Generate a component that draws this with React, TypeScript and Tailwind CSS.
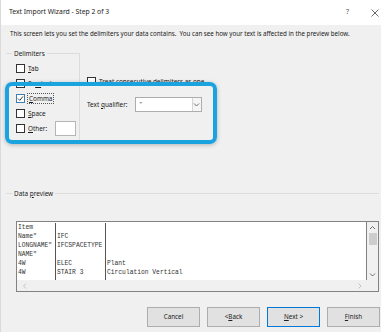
const ui = { fontFamily: '"Segoe UI", "Noto Sans", "Open Sans", sans-serif' };
const mono = { fontFamily: '"Liberation Mono", "Courier New", monospace' };

// ─── Bits ─────────────────────────────────────────────────────────────────────

const Box = ({ checked = false }: { checked?: boolean }) => (
  <span
    className={`flex h-[9px] w-[9px] shrink-0 items-center justify-center border bg-white ${checked ? "border-[#3c7fb1]" : "border-[#333]"}`}
  >
    {checked && (
      <svg width="7" height="7" viewBox="0 0 7 7">
        <path d="M1 3.6 L2.8 5.4 L6 1.4" fill="none" stroke="#2b2b2b" strokeWidth="0.9" />
      </svg>
    )}
  </span>
);

const Chevron = ({ dir }: { dir: "up" | "down" | "left" | "right" }) => {
  const d = {
    up: "M1 4 L3.5 1.5 L6 4",
    down: "M1 1.5 L3.5 4 L6 1.5",
    left: "M4 0.5 L1.5 3 L4 5.5",
    right: "M1.5 0.5 L4 3 L1.5 5.5",
  }[dir];
  return (
    <svg width="7" height="6" viewBox="0 0 7 6">
      <path d={d} fill="none" stroke={dir === "left" || dir === "right" ? "#bdbdbd" : "#606060"} strokeWidth="0.9" />
    </svg>
  );
};

const Btn = ({ children, primary = false }: { children: React.ReactNode; primary?: boolean }) => (
  <div
    className={`flex h-[20px] w-[53px] items-center justify-center bg-[#e1e1e1] text-[6.3px] text-[#222] ${primary ? "border border-[#0078d7]" : "border border-[#adadad]"}`}
  >
    {children}
  </div>
);

const rows = [
  ["Item", "", ""],
  ['Name"', "IFC", ""],
  ['LONGNAME"', "IFCSPACETYPE", ""],
  ['NAME"', "", ""],
  ["4W", "ELEC", "Plant"],
  ["4W", "STAIR 3", "Circulation Vertical"],
];

// ─── Component ────────────────────────────────────────────────────────────────

export default function App() {
  return (
    <div className="relative h-[332px] w-[386px] overflow-hidden bg-white text-[#1a1a1a]" style={ui}>
      <div className="flex h-full w-[381px] flex-col border-l border-[#dadada]">
        {/* title bar */}
        <div className="flex h-[25px] shrink-0 items-center bg-white pl-[8px] text-[6.8px]">
          <span className="flex-1">Text Import Wizard - Step 2 of 3</span>
          <span className="mr-[22px] text-[7px] text-[#555]">?</span>
          <svg width="8" height="8" viewBox="0 0 8 8" className="mr-[2px]">
            <path d="M0.5 0.5 L7.5 7.5 M7.5 0.5 L0.5 7.5" stroke="#444" strokeWidth="0.8" />
          </svg>
        </div>

        {/* body */}
        <div className="relative flex flex-1 flex-col bg-[#f0f0f0] pl-[5px]">
          <p className="mt-[5px] pl-[4px] text-[6.2px] leading-[8px] text-[#222]">
            This screen lets you set the delimiters your data contains.&nbsp; You can see how your text is affected in the preview below.
          </p>

          <div className="mt-[15px] flex">
            {/* Delimiters group */}
            <div className="relative h-[90px] w-[74px] border-t border-r border-[#dcdcdc] pl-[10px] pt-[7px] text-[6.4px]">
              <span className="absolute -top-[5px] left-[6px] bg-[#f0f0f0] px-[2px] leading-[9px]">Delimiters</span>
              <div className="flex h-[15px] items-center gap-[2px]">
                <Box />
                <span className="px-[1px]"><u>T</u>ab</span>
              </div>
              <div className="flex h-[15px] items-center gap-[2px]">
                <Box />
                <span className="px-[1px]">Se<u>m</u>icolon</span>
              </div>
              <div className="flex h-[15px] items-center gap-[2px]">
                <Box checked />
                <span className="border border-dotted border-[#555] px-[1px] leading-[9px]"><u>C</u>omma</span>
              </div>
              <div className="flex h-[15px] items-center gap-[2px]">
                <Box />
                <span className="px-[1px]"><u>S</u>pace</span>
              </div>
              <div className="flex h-[15px] items-center gap-[2px]">
                <Box />
                <span className="px-[1px]"><u>O</u>ther:</span>
                <span className="ml-[5px] h-[15px] w-[21px] border border-[#b5b5b5] bg-white" />
              </div>
            </div>

            {/* right options */}
            <div className="ml-[7px] flex flex-col text-[6.4px]">
              <div className="mt-[24px] flex h-[9px] items-center gap-[2px]">
                <Box />
                <span className="px-[1px]">T<u>r</u>eat consecutive delimiters as one</span>
              </div>
              <div className="mt-[11px] flex items-center">
                <span>Text <u>q</u>ualifier:</span>
                <div className="ml-[7px] flex h-[15px] w-[67px] items-center border border-[#adadad] bg-white">
                  <span className="flex-1 pl-[4px] text-[6px]">"</span>
                  <span className="flex h-full w-[9px] items-center justify-center border-l border-[#d5d5d5] bg-[#f5f5f5]">
                    <Chevron dir="down" />
                  </span>
                </div>
              </div>
            </div>
          </div>

          {/* Data preview group */}
          <div className="relative mt-[50px] mr-[2px] h-[100px] border-t border-[#dcdcdc] pl-[10px] pt-[27px]">
            <span className="absolute -top-[5px] left-[6px] bg-[#f0f0f0] px-[2px] text-[6.4px] leading-[9px]">
              Data <u>p</u>review
            </span>

            <div className="flex h-[71px] w-[363px] flex-col border border-[#828282] bg-[#f0f0f0]">
              <div className="flex h-[59px]">
                <div className="flex flex-1 border-r border-[#828282] bg-white pt-[1px] text-[6.3px] leading-[9px] text-[#333]" style={mono}>
                  <div className="w-[39px] border-r border-[#555] pl-[1px]">
                    {rows.map((r, i) => (
                      <div key={i} className="h-[9px] whitespace-pre">{r[0]}</div>
                    ))}
                  </div>
                  <div className="w-[50px] border-r border-[#555] pl-[1px]">
                    {rows.map((r, i) => (
                      <div key={i} className="h-[9px] whitespace-pre">{r[1]}</div>
                    ))}
                  </div>
                  <div className="flex-1 pl-[1px]">
                    {rows.map((r, i) => (
                      <div key={i} className="h-[9px] whitespace-pre">{r[2]}</div>
                    ))}
                  </div>
                </div>
                {/* vertical scrollbar */}
                <div className="flex w-[11px] flex-col items-center bg-[#f0f0f0]">
                  <div className="flex h-[11px] items-center"><Chevron dir="up" /></div>
                  <div className="h-[12px] w-[8px] bg-[#cdcdcd]" />
                  <div className="flex-1" />
                  <div className="flex h-[11px] items-center"><Chevron dir="down" /></div>
                </div>
              </div>
              {/* horizontal scrollbar */}
              <div className="flex h-[11px] items-center justify-between pl-[5px] pr-[14px]">
                <Chevron dir="left" />
                <Chevron dir="right" />
              </div>
            </div>
          </div>

          {/* buttons */}
          <div className="mt-[14px] flex justify-end gap-[7px] pr-[1px]">
            <Btn>Cancel</Btn>
            <Btn>&lt; <u>B</u>ack</Btn>
            <Btn primary><u>N</u>ext &gt;</Btn>
            <Btn><u>F</u>inish</Btn>
          </div>
        </div>
      </div>

      {/* highlight annotation drawn over the dialog */}
      <div className="absolute left-[5px] top-[82px] h-[62px] w-[212px] rounded-[7px] border-4 border-[#1ba3e0] shadow-[0_1px_4px_rgba(0,0,0,0.25)]" />
    </div>
  );
}
